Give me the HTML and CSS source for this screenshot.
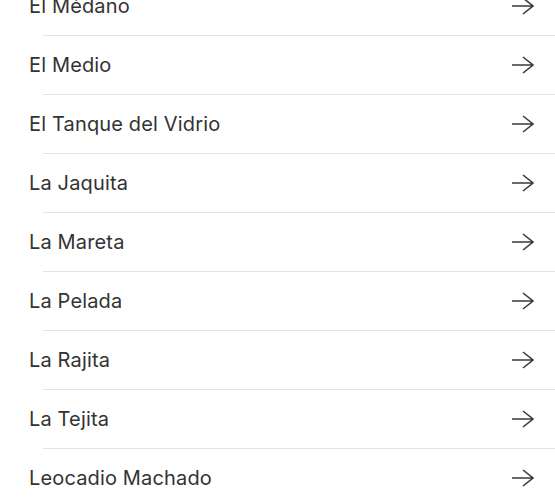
FILE: index.html
```html
<!DOCTYPE html>
<html lang="es">
  <head>
    <meta charset="UTF-8" />
    <meta name="viewport" content="width=device-width, initial-scale=1.0" />
    <title>Playas</title>
    <link rel="stylesheet" href="styles.css">
  </head>
  <body>
    <ul class="list">
      <li class="item"><span class="name">El Médano</span><svg class="arrow" viewBox="0 0 22 18"><path d="M0 9H21M11 1L21 9L11 17" /></svg></li>
      <li class="item"><span class="name">El Medio</span><svg class="arrow" viewBox="0 0 22 18"><path d="M0 9H21M11 1L21 9L11 17" /></svg></li>
      <li class="item"><span class="name">El Tanque del Vidrio</span><svg class="arrow" viewBox="0 0 22 18"><path d="M0 9H21M11 1L21 9L11 17" /></svg></li>
      <li class="item"><span class="name">La Jaquita</span><svg class="arrow" viewBox="0 0 22 18"><path d="M0 9H21M11 1L21 9L11 17" /></svg></li>
      <li class="item"><span class="name">La Mareta</span><svg class="arrow" viewBox="0 0 22 18"><path d="M0 9H21M11 1L21 9L11 17" /></svg></li>
      <li class="item"><span class="name">La Pelada</span><svg class="arrow" viewBox="0 0 22 18"><path d="M0 9H21M11 1L21 9L11 17" /></svg></li>
      <li class="item"><span class="name">La Rajita</span><svg class="arrow" viewBox="0 0 22 18"><path d="M0 9H21M11 1L21 9L11 17" /></svg></li>
      <li class="item"><span class="name">La Tejita</span><svg class="arrow" viewBox="0 0 22 18"><path d="M0 9H21M11 1L21 9L11 17" /></svg></li>
      <li class="item"><span class="name">Leocadio Machado</span><svg class="arrow" viewBox="0 0 22 18"><path d="M0 9H21M11 1L21 9L11 17" /></svg></li>
    </ul>
  </body>
</html>
```

FILE: styles.css
```css
body {
  background-color: #ffffff;
  margin: 0;
  padding: 0;
  color: #333333;
  font-family: Inter, "Noto Sans", sans-serif;
  overflow: hidden;
}

.list {
  list-style: none;
  margin: -23px 0 0 0;
  padding: 0;
}

.item {
  display: flex;
  align-items: center;
  justify-content: space-between;
  height: 58px;
  margin-left: 43px;
  padding-right: 21px;
  border-bottom: 1px solid #e3e3e3;
}

.name {
  margin-left: -14px;
  font-size: 20px;
  letter-spacing: 0.15px;
}

.arrow {
  width: 22px;
  height: 18px;
  fill: none;
  stroke: #3a3a3a;
  stroke-width: 1.6;
}
```
